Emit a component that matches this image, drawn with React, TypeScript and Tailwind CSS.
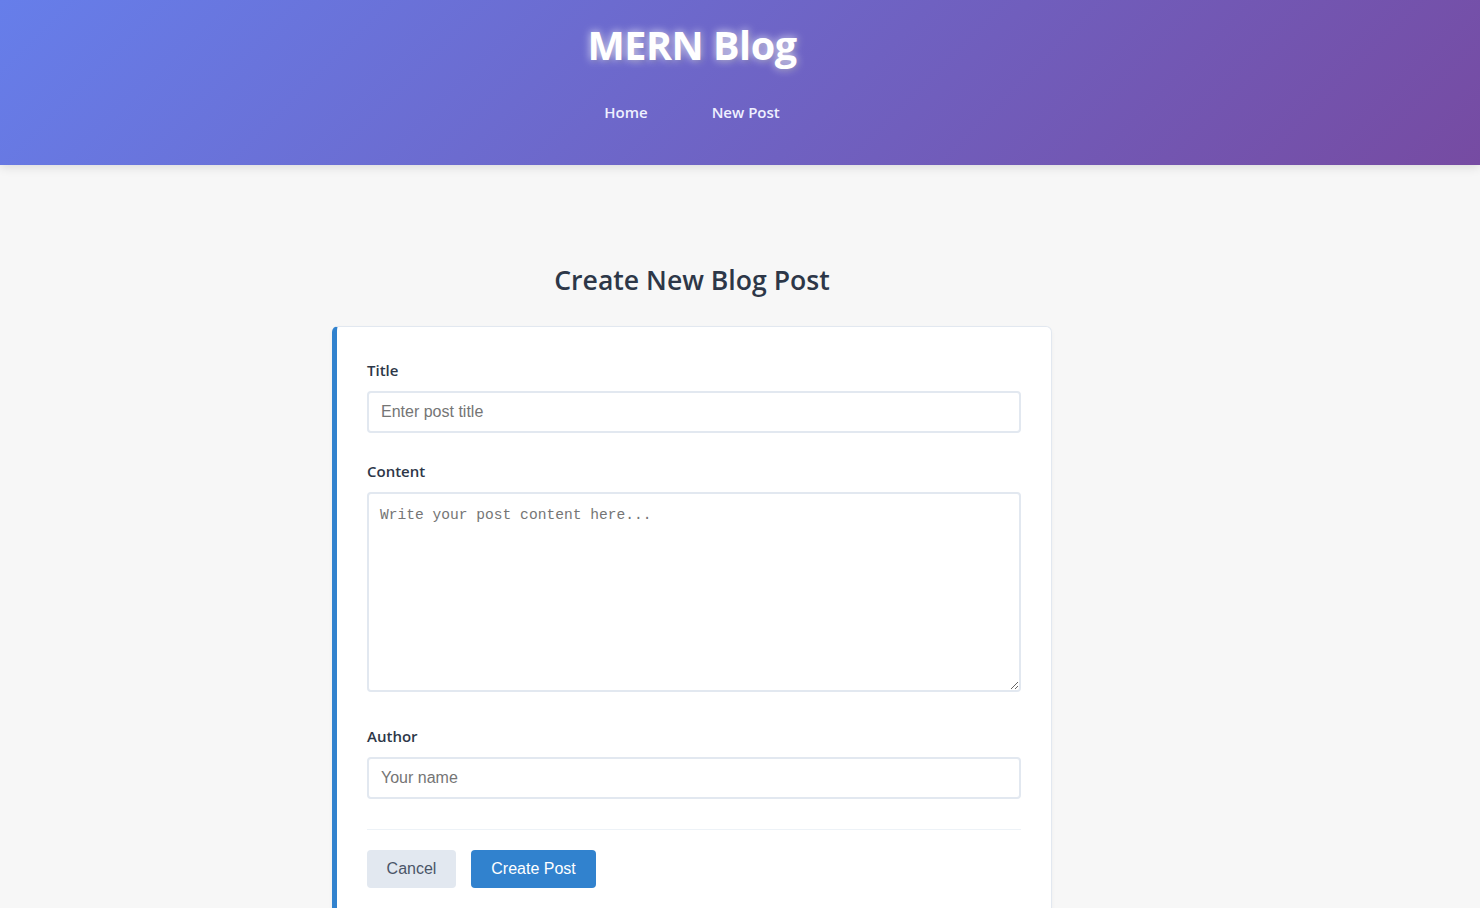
import React from "react";

export default function App() {
  const font = "font-['Open_Sans','Noto_Sans',sans-serif]";
  return (
    <div className={`min-h-[908px] bg-[#f7f7f7] ${font}`}>
      <header className="h-[165px] bg-[linear-gradient(135deg,#667eea_0%,#764ba2_100%)] shadow-[0_2px_10px_rgba(0,0,0,0.12)]">
        <div className="w-[1384px] flex flex-col items-center pt-[20px]">
          <h1 className="text-[39.6px] leading-[50px] font-bold text-white tracking-[-0.5px] [text-shadow:0_0_8px_rgba(255,255,255,0.8),2px_2px_4px_rgba(0,0,0,0.15)]">
            MERN Blog
          </h1>
          <nav className="mt-[30px] flex gap-[64px] h-[24px] items-center">
            <a className="text-[15px] font-semibold text-[#eef0ff]">Home</a>
            <a className="text-[15px] font-semibold text-[#eef0ff]">New Post</a>
          </nav>
        </div>
      </header>
      <main className="w-[1384px] flex flex-col items-center pt-[98px]">
        <h2 className="text-[26.6px] leading-[34px] font-semibold text-[#2d3748] mb-[29px]">
          Create New Blog Post
        </h2>
        <div className="w-[720px] bg-white border border-[#e2e8f0] border-l-[5px] border-l-[#3182ce] rounded-[6px] shadow-[0_2px_4px_rgba(0,0,0,0.04)] px-[30px] pt-[32px] pb-[30px]">
          <label className="block text-[15px] leading-[22px] font-semibold text-[#2d3748] mb-[10px]">Title</label>
          <input
            placeholder="Enter post title"
            className="block w-full h-[42px] border-2 border-[#e2e8f0] rounded-[4px] px-[12px] text-[16px] font-['Liberation_Sans',Arial,sans-serif] placeholder:text-[#757575] outline-none"
          />
          <label className="block mt-[27px] text-[15px] leading-[22px] font-semibold text-[#2d3748] mb-[10px]">Content</label>
          <textarea
            placeholder="Write your post content here..."
            className="block w-full h-[200px] border-2 border-[#e2e8f0] rounded-[4px] px-[11px] pt-[11px] text-[14.6px] leading-[20px] font-['Liberation_Mono','DejaVu_Sans_Mono',monospace] placeholder:text-[#757575] outline-none"
          />
          <label className="block mt-[33px] text-[15px] leading-[22px] font-semibold text-[#2d3748] mb-[10px]">Author</label>
          <input
            placeholder="Your name"
            className="block w-full h-[42px] border-2 border-[#e2e8f0] rounded-[4px] px-[12px] text-[16px] font-['Liberation_Sans',Arial,sans-serif] placeholder:text-[#757575] outline-none"
          />
          <div className="mt-[30px] border-t border-[#edf2f7] pt-[20px] flex gap-[15px]">
            <button className="h-[38px] w-[89px] rounded-[4px] bg-[#e2e8f0] text-[#4a5568] text-[16px] font-['Liberation_Sans',Arial,sans-serif]">
              Cancel
            </button>
            <button className="h-[38px] w-[125px] rounded-[4px] bg-[#3182ce] text-white text-[16px] font-['Liberation_Sans',Arial,sans-serif]">
              Create Post
            </button>
          </div>
        </div>
      </main>
    </div>
  );
}
